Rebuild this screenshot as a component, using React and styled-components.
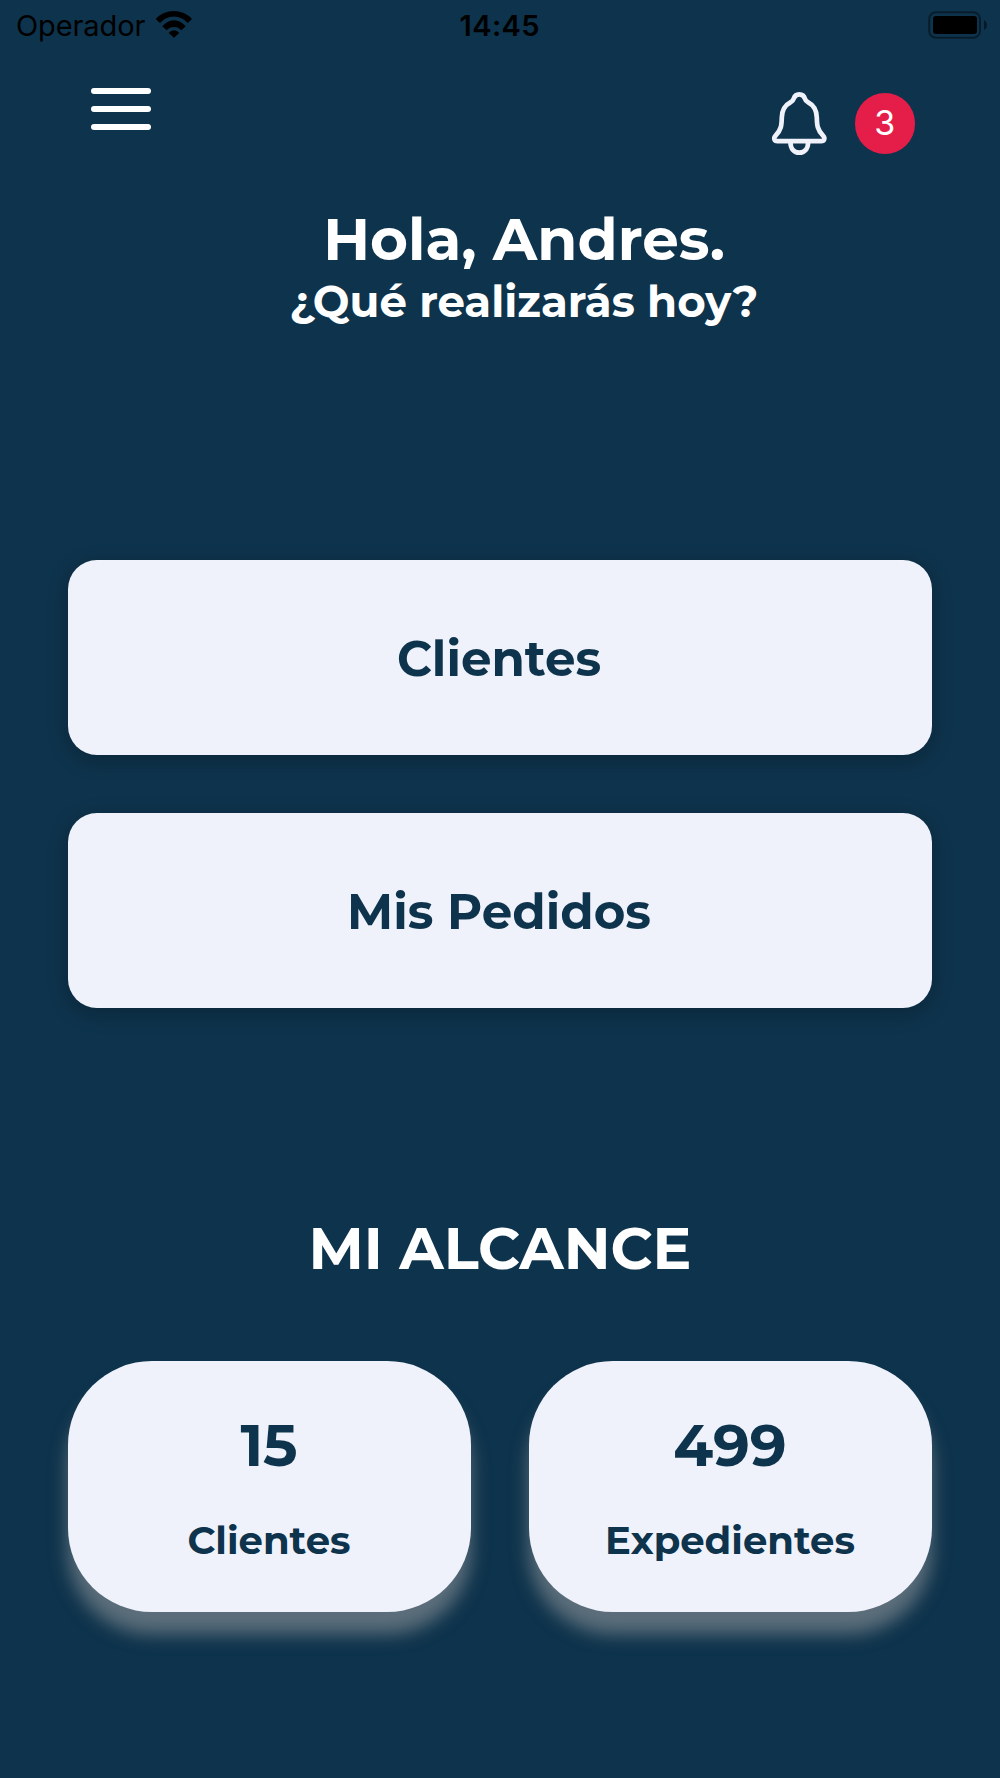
import React from "react";
import styled, { createGlobalStyle } from "styled-components";

const actions = ["Clientes", "Mis Pedidos"];

const stats = [
  { value: "15", label: "Clientes" },
  { value: "499", label: "Expedientes" },
];

export default function App() {
  return (
    <Screen>
      <GlobalStyle />
      <StatusBar>
        <Carrier>
          Operador
          <WifiIcon />
        </Carrier>
        <Clock>14:45</Clock>
        <BatteryIcon />
      </StatusBar>

      <Header>
        <MenuButton aria-label="Menu">
          <MenuLine />
          <MenuLine />
          <MenuLine />
        </MenuButton>
        <Notifications>
          <BellIcon />
          <Count>3</Count>
        </Notifications>
      </Header>

      <Greeting>
        <Title>Hola, Andres.</Title>
        <Subtitle>¿Qué realizarás hoy?</Subtitle>
      </Greeting>

      <Actions>
        {actions.map((action) => (
          <ActionButton key={action}>{action}</ActionButton>
        ))}
      </Actions>

      <Title>MI ALCANCE</Title>

      <Stats>
        {stats.map((stat) => (
          <StatCard key={stat.label}>
            <StatValue>{stat.value}</StatValue>
            <StatLabel>{stat.label}</StatLabel>
          </StatCard>
        ))}
      </Stats>
    </Screen>
  );
}

function WifiIcon() {
  return (
    <svg width="38" height="28.67" viewBox="465 28 114 86" fill="#000000">
      <path d="M467 55A73.9 73.9 0 0 1 576 55L563 67A54 54 0 0 0 480 67Z" />
      <path d="M487 77A43 43 0 0 1 557 77L544 89A29 29 0 0 0 500 89Z" />
      <path d="M506 97A20 20 0 0 1 538 97L522 111Z" />
    </svg>
  );
}

function BatteryIcon() {
  return (
    <svg width="60" height="28" viewBox="0 0 60 28">
      <rect
        x="1.2"
        y="1.2"
        width="50.8"
        height="25.6"
        rx="6.8"
        fill="none"
        stroke="#000000"
        strokeOpacity="0.42"
        strokeWidth="2"
      />
      <rect x="5" y="5" width="44" height="18" rx="3" fill="#000000" />
      <path d="M56 9C60 11 60 17 56 19Z" fillOpacity="0.5" />
    </svg>
  );
}

function BellIcon() {
  return (
    <svg
      width="58"
      height="66"
      viewBox="0 0 58 66"
      fill="none"
      stroke="#eff2fa"
      strokeWidth="4.7"
      strokeLinejoin="round"
    >
      <path d="M29.3 4.3C26 4.3 24.4 6 23.7 8.6C23.2 10.6 22.4 11.3 20.4 12.3C14.7 15.2 12 20 11.8 27.5C11.6 35.5 11.3 39.5 5.6 45.7C3.1 48.4 4.4 51.2 7.4 51.2H51.2C54.2 51.2 55.5 48.4 53 45.7C47.3 39.5 47 35.5 46.8 27.5C46.6 20 43.9 15.2 38.2 12.3C36.2 11.3 35.4 10.6 34.9 8.6C34.2 6 32.6 4.3 29.3 4.3Z" />
      <path d="M20.5 52.5C20.5 58.6 24 62.7 29.3 62.7C34.6 62.7 38.1 58.6 38.1 52.5" />
    </svg>
  );
}

// Styled Components
const GlobalStyle = createGlobalStyle`
  * {
    box-sizing: border-box;
  }

  body {
    margin: 0;
    background: #0e334c;
  }
`;

const Screen = styled.main`
  height: 1778px;
  display: flex;
  flex-direction: column;
  background: #0e334c;
  color: #ffffff;
  font-family: Montserrat, Inter, sans-serif;
`;

const StatusBar = styled.div`
  height: 50px;
  padding: 0 12.5px 0 16px;
  display: grid;
  grid-template-columns: 1fr auto 1fr;
  align-items: center;
  color: #000000;
  font-family: Inter, sans-serif;
  font-size: 29px;
  line-height: 50px;

  > svg {
    justify-self: end;
    margin-bottom: 1px;
  }
`;

const Carrier = styled.div`
  display: flex;
  align-items: center;
  gap: 10px;
  padding-top: 1px;
  letter-spacing: -0.1px;

  svg {
    margin-bottom: 4px;
  }
`;

const Clock = styled.div`
  padding-top: 1px;
  margin-right: 4px;
  font-weight: 600;
  letter-spacing: 0.4px;
`;

const Header = styled.header`
  height: 156px;
  padding: 38px 85px 0 90.5px;
  display: flex;
  justify-content: space-between;
  align-items: flex-start;
`;

const MenuButton = styled.button`
  display: flex;
  flex-direction: column;
  gap: 12px;
  padding: 0;
  border: 0;
  background: none;
  cursor: pointer;
`;

const MenuLine = styled.span`
  width: 60.5px;
  height: 6px;
  border-radius: 3px;
  background: #ffffff;
`;

const Notifications = styled.div`
  display: flex;
  align-items: center;
  gap: 26.5px;
  padding-top: 2px;
`;

const Count = styled.span`
  width: 60.5px;
  height: 60.5px;
  margin-top: 0.5px;
  border-radius: 50%;
  background: #e41e49;
  color: #ffffff;
  font-family: Inter, sans-serif;
  font-size: 34px;
  font-weight: 400;
  line-height: 60px;
  text-align: center;
`;

const Greeting = styled.section`
  height: 354px;
  padding-left: 48px;
`;

const Title = styled.h1`
  margin: 0;
  font-size: 58px;
  font-weight: 700;
  line-height: 68px;
  text-align: center;
`;

const Subtitle = styled.h2`
  margin: 0;
  font-size: 43.5px;
  font-weight: 700;
  line-height: 56px;
  text-align: center;
`;

const Actions = styled.nav`
  display: flex;
  flex-direction: column;
  gap: 58px;
  padding: 0 68px;
  margin-bottom: 207px;
`;

const ActionButton = styled.button`
  height: 195px;
  padding: 1px 2px 0 0;
  border: 0;
  border-radius: 29px;
  background: #eff2fa;
  box-shadow: 0 5px 20px rgba(0, 0, 0, 0.25);
  color: #0e334c;
  font-family: inherit;
  font-size: 48.3px;
  font-weight: 700;
  cursor: pointer;
`;

const Stats = styled.section`
  display: grid;
  grid-template-columns: 1fr 1fr;
  gap: 58px;
  padding: 0 68px;
  margin-top: 78px;
`;

const StatCard = styled.article`
  height: 251px;
  padding: 51px 1px 0 0;
  border-radius: 84px;
  background: #eff2fa;
  box-shadow: 0 22px 18px rgba(170, 170, 170, 0.5);
  color: #0e334c;
  text-align: center;
`;

const StatValue = styled.div`
  font-size: 58px;
  font-weight: 700;
  line-height: 68px;
`;

const StatLabel = styled.div`
  margin-top: 35px;
  font-size: 38.6px;
  font-weight: 700;
  line-height: 51px;
`;
